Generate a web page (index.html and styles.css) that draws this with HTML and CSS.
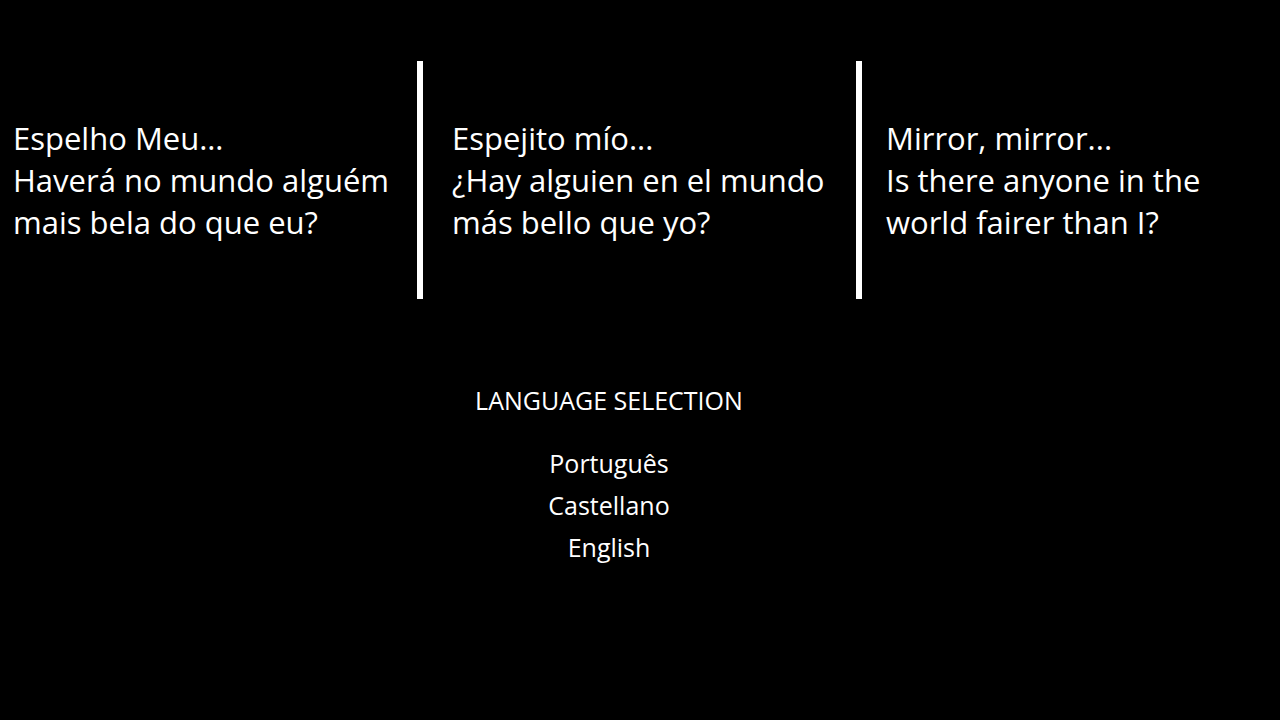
FILE: index.html
```html
<!DOCTYPE html>
<html lang="en">
<head>
    <meta charset="UTF-8">
    <meta name="viewport" content="width=device-width, initial-scale=1.0">
    <title>Espelho Meu</title>
    <link rel="stylesheet" href="styles.css">
</head>
<body>
    <div class="quotes">
        <div class="quote quote-pt">
            <p>Espelho Meu…<br>Haverá no mundo alguém<br>mais bela do que eu?</p>
        </div>
        <div class="divider"></div>
        <div class="quote quote-es">
            <p>Espejito mío...<br>¿Hay alguien en el mundo<br>más bello que yo?</p>
        </div>
        <div class="divider"></div>
        <div class="quote quote-en">
            <p>Mirror, mirror...<br>Is there anyone in the<br>world fairer than I?</p>
        </div>
    </div>

    <div class="language">
        <h2>LANGUAGE SELECTION</h2>
        <ul class="language-list">
            <li><a href="#">Português</a></li>
            <li><a href="#">Castellano</a></li>
            <li><a href="#">English</a></li>
        </ul>
    </div>
</body>
</html>
```

FILE: styles.css
```css
* {
    margin: 0;
    padding: 0;
    box-sizing: border-box;
}

body {
    background: #000;
    color: #fff;
    font-family: "Open Sans", "Noto Sans", sans-serif;
    min-height: 100vh;
}

.quotes {
    display: flex;
    align-items: stretch;
    padding-top: 61px;
    height: 299px;
}

.quote {
    display: flex;
    align-items: center;
    font-size: 31px;
    line-height: 42px;
}

.quote-pt {
    width: 417px;
    padding-left: 13px;
}

.quote-es {
    width: 433px;
    padding-left: 29px;
}

.quote-en {
    flex: 1;
    padding-left: 24px;
}

.divider {
    width: 6px;
    background: #fff;
}

.language {
    width: 1218px;
    margin-top: 80px;
    text-align: center;
}

.language h2 {
    font-size: 25px;
    font-weight: 400;
    line-height: 42px;
    margin-bottom: 21px;
}

.language-list {
    list-style: none;
}

.language-list li {
    font-size: 25px;
    line-height: 42px;
}

.language-list a {
    color: #fff;
    text-decoration: none;
}
```
